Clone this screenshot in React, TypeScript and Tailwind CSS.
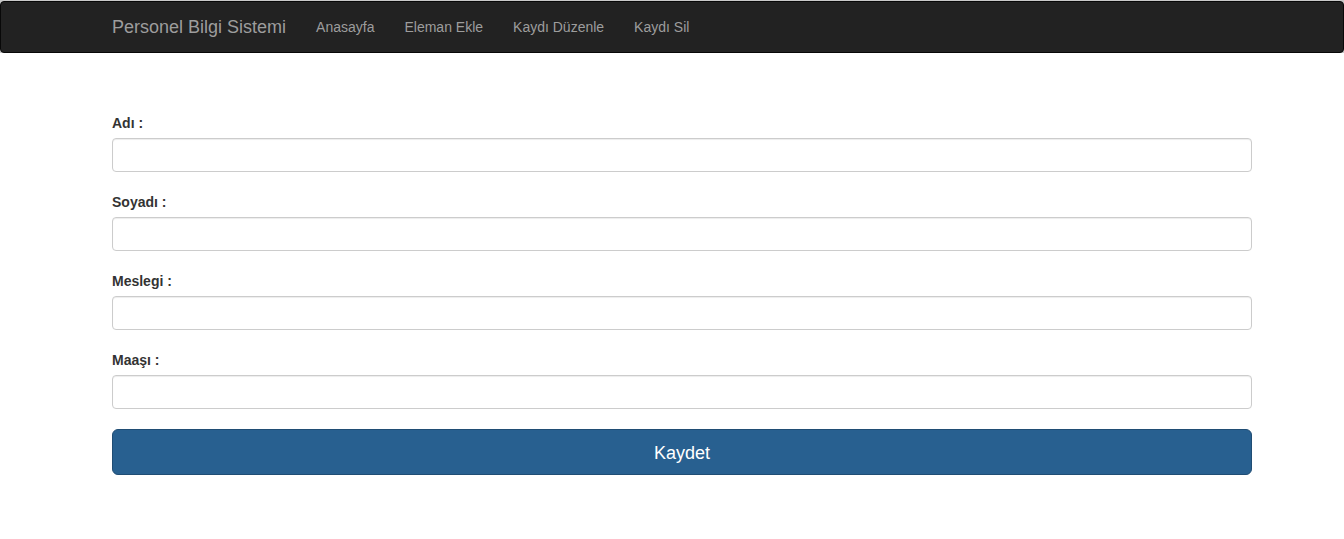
const fields = ["Adı :", "Soyadı :", "Meslegi :", "Maaşı :"];

export default function App() {
    return (
        <div className="min-h-[539px] bg-white text-[#333] text-sm" style={{ fontFamily: '"Liberation Sans", Arial, sans-serif' }}>
            <div className="pt-px bg-[#c9c9c9]">
                <nav className="h-[52px] bg-[#222] border border-[#080808] rounded-[4px] flex items-center pl-[111px]">
                    <div className="text-[18px] leading-5 text-[#9d9d9d] mr-[15px]">Personel Bilgi Sistemi</div>
                    <ul className="flex">
                        <li className="px-[15px] text-[#9d9d9d] leading-5">Anasayfa</li>
                        <li className="px-[15px] text-[#9d9d9d] leading-5">Eleman Ekle</li>
                        <li className="px-[15px] text-[#9d9d9d] leading-5">Kaydı Düzenle</li>
                        <li className="px-[15px] text-[#9d9d9d] leading-5">Kaydı Sil</li>
                    </ul>
                </nav>
            </div>

            <form className="pl-[112px] pr-[92px] pt-[60px]">
                {fields.map((f) => (
                    <div key={f} className="mb-5">
                        <label className="block font-bold leading-5 mb-[5px]">{f}</label>
                        <input
                            type="text"
                            className="block w-full h-[34px] border border-[#ccc] rounded-[4px] px-3 shadow-[inset_0_1px_1px_rgba(0,0,0,0.075)] outline-none"
                        />
                    </div>
                ))}
                <button
                    type="button"
                    className="flex items-center justify-center w-full h-[46px] pt-px bg-[#286090] border border-[#204d74] rounded-[6px] text-white text-[18px] leading-6"
                >
                    Kaydet
                </button>
            </form>
        </div>
    );
}
